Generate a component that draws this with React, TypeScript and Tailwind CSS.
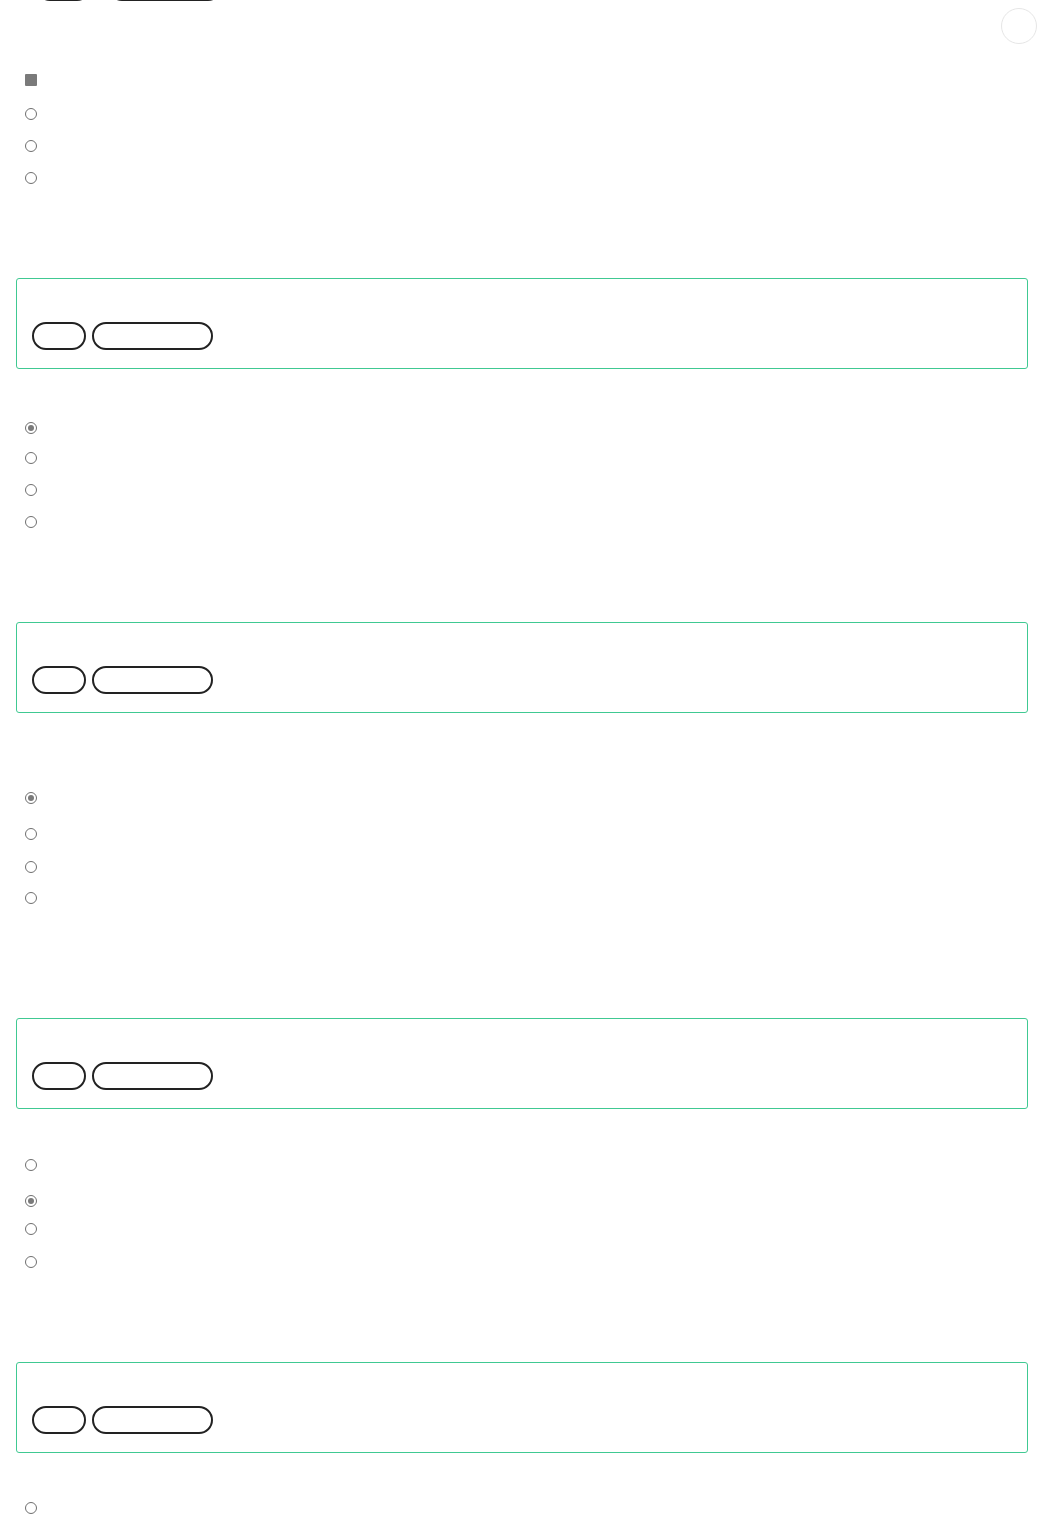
type Item =
  | { kind: 'square'; mt: string }
  | { kind: 'radio'; mt: string; checked?: boolean }
  | { kind: 'box'; mt: string };

const items: Item[] = [
  { kind: 'square', mt: 'mt-[73px]' },
  { kind: 'radio', mt: 'mt-[22px]' },
  { kind: 'radio', mt: 'mt-[20px]' },
  { kind: 'radio', mt: 'mt-[20px]' },
  { kind: 'box', mt: 'mt-[94px]' },
  { kind: 'radio', mt: 'mt-[53px]', checked: true },
  { kind: 'radio', mt: 'mt-[18px]' },
  { kind: 'radio', mt: 'mt-[20px]' },
  { kind: 'radio', mt: 'mt-[20px]' },
  { kind: 'box', mt: 'mt-[94px]' },
  { kind: 'radio', mt: 'mt-[79px]', checked: true },
  { kind: 'radio', mt: 'mt-[24px]' },
  { kind: 'radio', mt: 'mt-[21px]' },
  { kind: 'radio', mt: 'mt-[19px]' },
  { kind: 'box', mt: 'mt-[114px]' },
  { kind: 'radio', mt: 'mt-[50px]' },
  { kind: 'radio', mt: 'mt-[24px]', checked: true },
  { kind: 'radio', mt: 'mt-[16px]' },
  { kind: 'radio', mt: 'mt-[21px]' },
  { kind: 'box', mt: 'mt-[94px]' },
  { kind: 'radio', mt: 'mt-[49px]' },
];

function Pill({ w }: { w: string }) {
  return <span className={`${w} h-[28px] rounded-full border-2 border-[#222]`} />;
}

function Radio({ checked }: { checked?: boolean }) {
  return (
    <span className="flex w-[12px] h-[12px] items-center justify-center rounded-full border-[1.5px] border-[#6f6f6f]">
      {checked && <span className="w-[6px] h-[6px] rounded-full bg-[#7a7a7a]" />}
    </span>
  );
}

export default function App() {
  return (
    <main className="relative min-h-[1515px] overflow-hidden bg-white px-4 font-['Liberation_Sans',sans-serif]">
      <div className="-mt-[27px] flex h-[28px] pl-[20px] gap-[17px]">
        <Pill w="w-[55px]" />
        <Pill w="w-[114px]" />
      </div>

      <button className="absolute right-[7px] top-[8px] h-[36px] w-[36px] rounded-full border-[1.5px] border-[#e6e6e6] bg-white" />

      {items.map((item, i) => {
        if (item.kind === 'box') {
          return (
            <div
              key={i}
              className={`${item.mt} h-[91px] rounded-[3px] border border-[#40c992] pl-[15px] pt-[43px]`}
            >
              <div className="flex gap-[6px]">
                <Pill w="w-[54px]" />
                <Pill w="w-[121px]" />
              </div>
            </div>
          );
        }
        return (
          <div key={i} className={`${item.mt} flex h-[12px] pl-[9px]`}>
            {item.kind === 'square' ? (
              <span className="w-[12px] h-[12px] rounded-[1px] bg-[#7a7a7a]" />
            ) : (
              <Radio checked={item.checked} />
            )}
          </div>
        );
      })}
    </main>
  );
}
